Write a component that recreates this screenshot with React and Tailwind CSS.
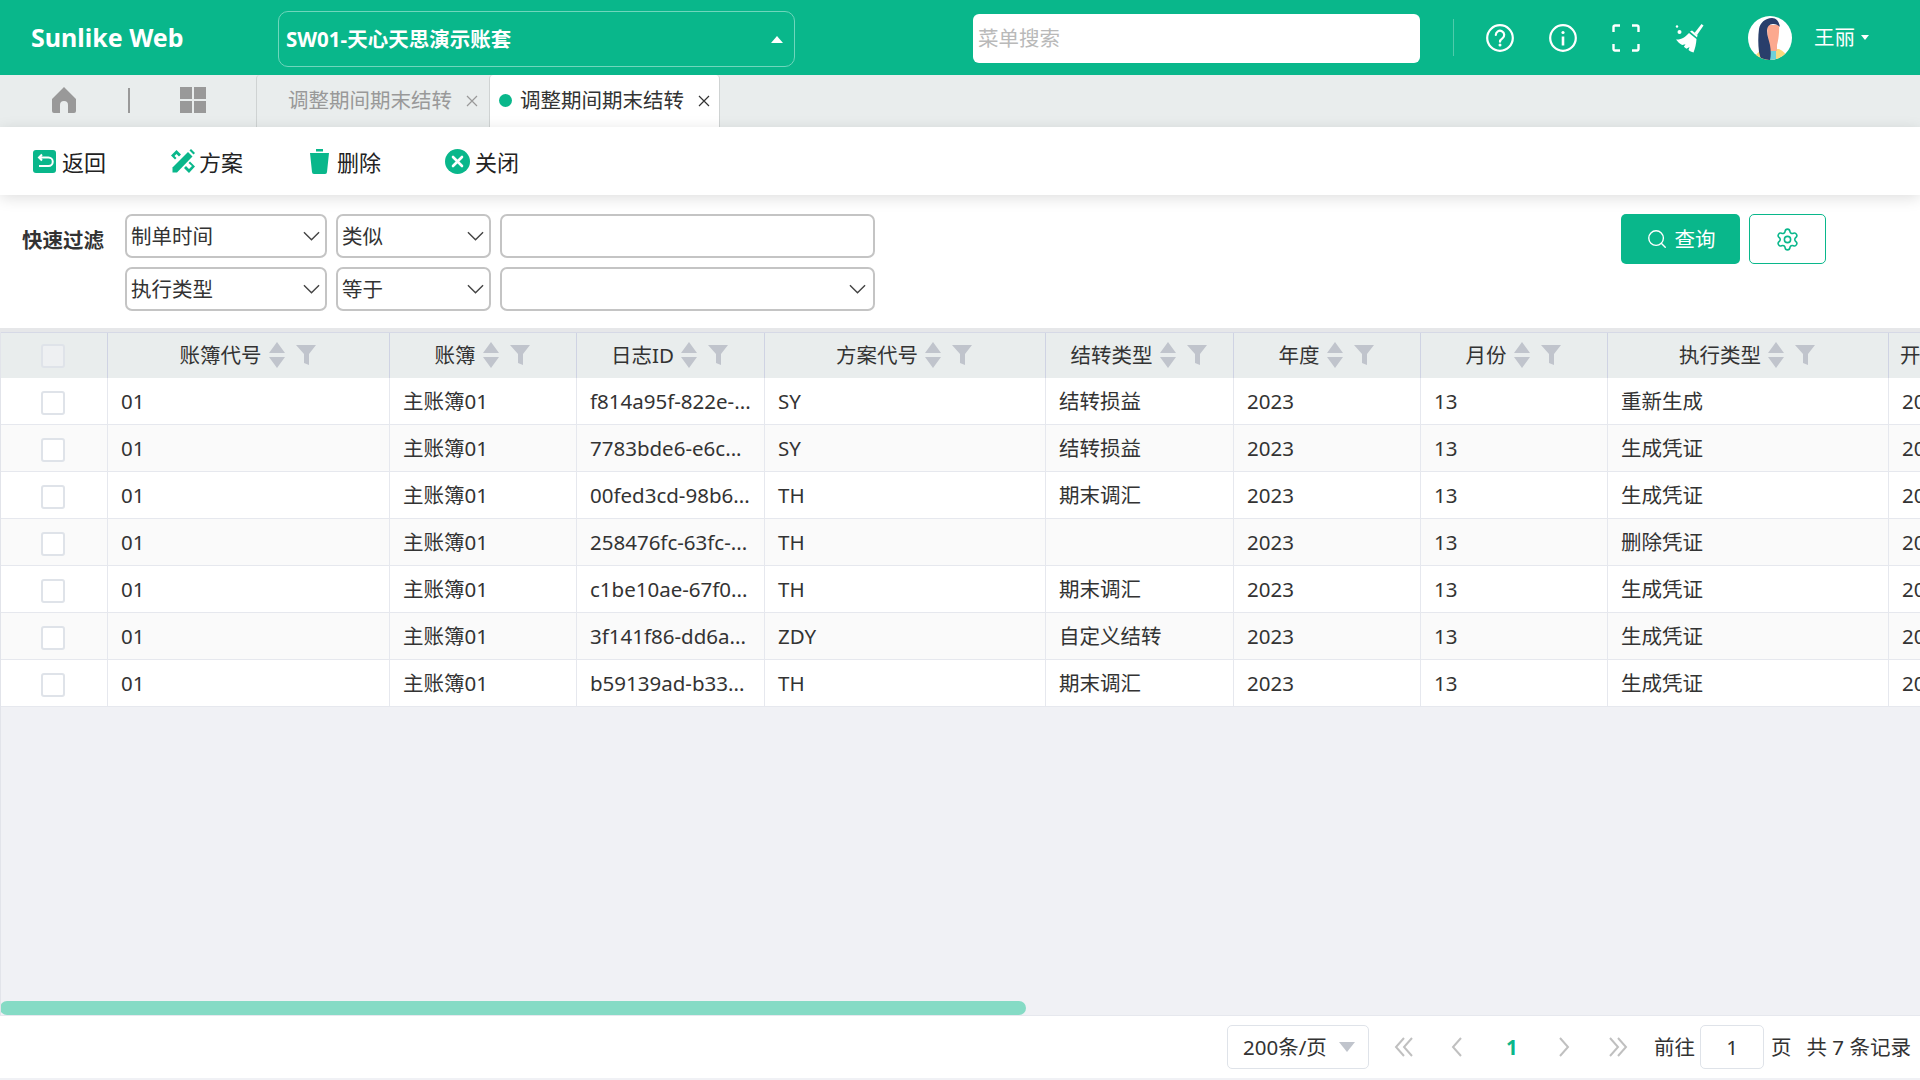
import React from 'react';
import { Search, Settings } from 'lucide-react';

const columns = [
  { label: '账簿代号', w: 'w-[282px]' },
  { label: '账簿', w: 'w-[187px]' },
  { label: '日志ID', w: 'w-[188px]' },
  { label: '方案代号', w: 'w-[281px]' },
  { label: '结转类型', w: 'w-[188px]' },
  { label: '年度', w: 'w-[187px]' },
  { label: '月份', w: 'w-[187px]' },
  { label: '执行类型', w: 'w-[281px]' },
];

const rows = [
  ['01', '主账簿01', 'f814a95f-822e-...', 'SY', '结转损益', '2023', '13', '重新生成'],
  ['01', '主账簿01', '7783bde6-e6c...', 'SY', '结转损益', '2023', '13', '生成凭证'],
  ['01', '主账簿01', '00fed3cd-98b6...', 'TH', '期末调汇', '2023', '13', '生成凭证'],
  ['01', '主账簿01', '258476fc-63fc-...', 'TH', '', '2023', '13', '删除凭证'],
  ['01', '主账簿01', 'c1be10ae-67f0...', 'TH', '期末调汇', '2023', '13', '生成凭证'],
  ['01', '主账簿01', '3f141f86-dd6a...', 'ZDY', '自定义结转', '2023', '13', '生成凭证'],
  ['01', '主账簿01', 'b59139ad-b33...', 'TH', '期末调汇', '2023', '13', '生成凭证'],
];

const Chevron = () => (
  <svg viewBox="0 0 18 10" className="w-[17px] h-[10px]" fill="none" stroke="#444" strokeWidth="1.5">
    <path d="M1 1l8 8 8-8" />
  </svg>
);

const FilterSelect = ({ value, pr = 'pr-[5px]' }) => (
  <div className={`h-[44px] border-2 border-[#c4c4c4] rounded-[7px] flex items-center justify-between pl-[4px] ${pr} text-[20.5px] text-[#333]`}>
    <span className="pt-[1px]">{value}</span>
    <Chevron />
  </div>
);

const SortFilter = () => (
  <span className="flex items-center ml-[7px] gap-[11px] -mt-[1px]">
    <svg viewBox="0 0 16 26" className="w-[16px] h-[26px]" fill="#c0c4cc">
      <path d="M8 0l8 11H0zM0 15h16L8 26z" />
    </svg>
    <svg viewBox="0 0 20 20" className="w-[20px] h-[20px]" fill="#c0c4cc">
      <path d="M0 0h20l-7 9v11l-5-2V9z" />
    </svg>
  </span>
);

const Checkbox = ({ header }) => (
  <span className={`block w-[24px] h-[24px] rounded-[3px] border-2 border-[#dfe3e9] ${header ? 'bg-[#eef0f2]' : 'bg-white'}`} />
);

const ToolButton = ({ icon, label, className }) => (
  <div className={`flex items-center gap-[6px] text-[22px] text-[#222] ${className}`}>
    {icon}
    <span className="pt-[3px]">{label}</span>
  </div>
);

const PagerArrow = ({ d, className = '' }) => (
  <svg viewBox="0 0 22 20" className={`w-[22px] h-[20px] ${className}`} fill="none" stroke="#c0c0c0" strokeWidth="2">
    <path d={d} />
  </svg>
);

const TabClose = ({ color }) => (
  <svg viewBox="0 0 12 12" className="ml-[14px] w-[12px] h-[12px]" fill="none" stroke={color} strokeWidth="1.2">
    <path d="M1 1l10 10M11 1L1 11" />
  </svg>
);

export default function App() {
  return (
    <div className="w-[1920px] h-[1080px] overflow-hidden flex flex-col bg-[#f0f1f5] font-['Noto_Sans','Noto_Sans_CJK_SC',sans-serif]">
      {/* top bar */}
      <div className="h-[75px] shrink-0 bg-[#09b78b] flex items-center text-white">
        <div className="w-[278px] pl-[31px] text-[25px] font-bold leading-none">Sunlike Web</div>
        <div className="mt-[3px] w-[517px] h-[56px] border border-[#6fd6bc] rounded-[10px] flex items-center justify-between pl-[7px] pr-[11px] text-[20.5px] font-bold">
          <span>SW01-天心天思演示账套</span>
          <span className="w-0 h-0 border-x-[6px] border-x-transparent border-b-[7px] border-b-white" />
        </div>
        <div className="mt-[1px] ml-[178px] w-[447px] h-[49px] bg-white rounded-[6px] flex items-center pl-[5px] text-[20.5px] text-[#b9b9b9]">菜单搜索</div>
        <div className="ml-[33px] w-px h-[37px] bg-[#4fcbab]" />
        <svg viewBox="0 0 28 28" className="ml-[32px] w-[28px] h-[28px]" fill="none" stroke="#fff" strokeWidth="2.2">
          <circle cx="14" cy="14" r="12.8" />
          <path d="M9.8 11a4.2 4.2 0 1 1 6.6 3.4c-1.5 1-2.4 1.700-2.400 3.300" strokeLinecap="round" />
          <circle cx="14" cy="21" r="1.500" fill="#fff" stroke="none" />
        </svg>
        <svg viewBox="0 0 28 28" className="ml-[35px] w-[28px] h-[28px]" fill="none" stroke="#fff" strokeWidth="2.2">
          <circle cx="14" cy="14" r="12.8" />
          <circle cx="14" cy="8.500" r="1.600" fill="#fff" stroke="none" />
          <path d="M14 12.500v9" strokeWidth="2.600" />
        </svg>
        <svg viewBox="0 0 28 28" className="ml-[35px] w-[28px] h-[28px]" fill="none" stroke="#fff" strokeWidth="2.4">
          <path d="M1.500 8V3a1.500 1.500 0 0 1 1.500-1.500h5M20 1.500h5A1.500 1.500 0 0 1 26.500 3v5M26.500 20v5a1.500 1.500 0 0 1-1.500 1.500h-5M8 26.500H3A1.500 1.500 0 0 1 1.500 25v-5" />
        </svg>
        <svg viewBox="0 0 30 30" className="ml-[34px] w-[30px] h-[30px]" fill="#fff">
          <path d="M27.500 1l2 1.500-6.500 9.500-2.500-2z" />
          <path d="M16 8.500l2-1 5.500 4.500-.5 2.500z" />
          <path d="M15 10l7.500 6c-.3 4.500-1.300 9.500-3 13.500-2-.5-3.800-1.600-5-2.600l1-3-3 1.800c-1-.6-1.900-1.300-2.600-2l1.600-2.400-3.300.8C6 21 3.500 18.500 2 16.500c5 .5 9.500-2.500 13-6.500z" />
          <circle cx="3" cy="3.500" r="1.200" />
          <circle cx="5.500" cy="9" r="2" />
        </svg>
        <svg viewBox="0 0 44 44" className="ml-[44px] w-[44px] h-[44px]">
          <clipPath id="avatar"><circle cx="22" cy="22" r="22" /></clipPath>
          <g clipPath="url(#avatar)">
            <rect width="44" height="44" fill="#fff" />
            <path d="M6 44c1-6 5-9 11-11h14c5 2 8 6 9 11z" fill="#fbd97f" />
            <rect x="20" y="34" width="8" height="10" fill="#6fd0da" />
            <path d="M19 9h12c.5 7-.5 15-2 20v6h-9z" fill="#fca98f" />
            <path d="M24 2c-7 0-12 5-13 11-1 7-1 15 0 23l2 8h9c1-4 1-9 0-15-1-5-3-9-3-14 0-4 2-7 6-7 3 0 5 1 7 3-1-6-4-9-8-9z" fill="#293e6b" />
          </g>
        </svg>
        <span className="ml-[22px] text-[20.5px]">王丽</span>
        <span className="ml-[6px] w-0 h-0 border-x-[4px] border-x-transparent border-t-[5px] border-t-white" />
      </div>

      {/* tabs */}
      <div className="h-[52px] shrink-0 bg-[#e9eded] flex items-center">
        <div className="w-[256px] flex items-center pb-[2px]">
          <svg viewBox="0 0 24 26" className="ml-[52px] w-[24px] h-[26px]" fill="#999">
            <path d="M12 0l12 12v12a2 2 0 0 1-2 2h-6v-8a4 4 0 0 0-8 0v8H2a2 2 0 0 1-2-2V12z" />
          </svg>
          <span className="ml-[52px] w-[2px] h-[25px] bg-[#999]" />
          <svg viewBox="0 0 26 26" className="ml-[50px] w-[26px] h-[26px]" fill="#999">
            <rect width="12" height="12" /><rect x="14" width="12" height="12" />
            <rect y="14" width="12" height="12" /><rect x="14" y="14" width="12" height="12" />
          </svg>
        </div>
        <div className="w-[233px] h-full border-l border-[#cfd3d3] rounded-tl-[4px] flex items-center pl-[31px] text-[20.5px] text-[#999]">
          <span className="-mt-[2px]">调整期间期末结转</span>
          <TabClose color="#999" />
        </div>
        <div className="w-[231px] h-full bg-white border-x border-[#cfd3d3] rounded-t-[4px] flex items-center pl-[9px] text-[20.5px] text-[#333]">
          <span className="w-[13px] h-[13px] rounded-full bg-[#09b78b] -mt-[1px]" />
          <span className="ml-[8px] -mt-[2px]">调整期间期末结转</span>
          <TabClose color="#333" />
        </div>
      </div>

      {/* toolbar */}
      <div className="h-[68px] shrink-0 bg-white flex items-center relative z-10 shadow-[0_3px_14px_rgba(0,0,0,0.13)]">
        <ToolButton
          className="ml-[33px]"
          label="返回"
          icon={
            <svg viewBox="0 0 23 23" className="w-[23px] h-[23px]">
              <rect width="23" height="23" rx="3" fill="#09b78b" />
              <path d="M6.500 7.500h9a3.700 3.700 0 0 1 0 8.500H6M9 4.500L6 7.500l3 3" fill="none" stroke="#fff" strokeWidth="2" />
            </svg>
          }
        />
        <ToolButton
          className="ml-[64px]"
          label="方案"
          icon={
            <svg viewBox="0 0 25 25" className="w-[25px] h-[25px] -mr-[2px]" fill="#09b78b">
              <path d="M18 3l4.500 4.500L7 23.500H2.500V18.500z" />
              <path d="M19.500 1.500l1.500-1.500 4 4-1.500 1.500z" />
              <path d="M1 6.500L6.500 1l4.500 4.500-2 2-2.500-2.500L4.500 7l2 2-1.500 1.500z" />
              <path d="M18.500 14l1.500-1.500 5 5-6 6.500-5-5 2-2 3 3 3-3z" />
            </svg>
          }
        />
        <ToolButton
          className="ml-[67px]"
          label="删除"
          icon={
            <svg viewBox="0 0 19 25" className="w-[19px] h-[25px] mr-[2px]" fill="#09b78b">
              <path d="M6 0h7v2.500H6zM0 4h19l-2 19a2 2 0 0 1-2 2H4a2 2 0 0 1-2-2z" />
            </svg>
          }
        />
        <ToolButton
          className="ml-[64px]"
          label="关闭"
          icon={
            <svg viewBox="0 0 25 25" className="w-[25px] h-[25px] -mr-[1px]">
              <circle cx="12.500" cy="12.500" r="12.500" fill="#09b78b" />
              <path d="M8 8l9 9M17 8l-9 9" stroke="#fff" strokeWidth="2.600" strokeLinecap="round" />
            </svg>
          }
        />
      </div>

      {/* quick filter */}
      <div className="h-[133px] shrink-0 bg-white flex items-start pt-[19px] pl-[22px]">
        <div className="w-[103px] mt-[11px] text-[20.5px] font-bold text-[#333]">快速过滤</div>
        <div className="grid grid-cols-[202px_155px_375px] gap-x-[9px] gap-y-[9px]">
          <FilterSelect value="制单时间" />
          <FilterSelect value="类似" />
          <div className="h-[44px] border-2 border-[#c4c4c4] rounded-[7px]" />
          <FilterSelect value="执行类型" />
          <FilterSelect value="等于" />
          <FilterSelect value="" pr="pr-[7px]" />
        </div>
        <div className="ml-[746px] w-[119px] h-[50px] rounded-[5px] bg-[#09b78b] flex items-center justify-center gap-[7px] text-white text-[20.5px]">
          <Search size={22} strokeWidth={1.5} />
          <span>查询</span>
        </div>
        <div className="ml-[9px] w-[77px] h-[50px] rounded-[5px] border border-[#09b78b] bg-white flex items-center justify-center text-[#09b78b]">
          <Settings size={25} strokeWidth={1.5} />
        </div>
      </div>

      {/* table */}
      <div className="h-[4px] shrink-0 bg-[#e6e7e9]" />
      <div className="flex-1 min-h-0 flex flex-col border-l border-[#e2e4ea] overflow-hidden">
        <div className="h-[46px] shrink-0 flex bg-[#e9eded] border-t border-[#d6d9e6] text-[20.5px] text-[#333]">
          <div className="w-[107px] shrink-0 flex items-center justify-center border-r border-[#cfd3e3] pr-[2px] pt-[1px]">
            <Checkbox header />
          </div>
          {columns.map((col) => (
            <div key={col.label} className={`${col.w} shrink-0 flex items-center justify-center border-r border-[#cfd3e3] pb-[1px] pr-[2px]`}>
              <span>{col.label}</span>
              <SortFilter />
            </div>
          ))}
          <div className="flex-1 pl-[11px] flex items-center overflow-hidden whitespace-nowrap">开始时间</div>
        </div>
        {rows.map((row, i) => (
          <div key={i} className={`h-[47px] shrink-0 flex border-b border-[#e6e8ee] text-[20.5px] text-[#333] ${i % 2 ? 'bg-[#fafafa]' : 'bg-white'}`}>
            <div className="w-[107px] shrink-0 flex items-center justify-center border-r border-[#e6e8ee] pr-[2px] pt-[3px]">
              <Checkbox />
            </div>
            {row.map((cell, j) => (
              <div key={j} className={`${columns[j].w} shrink-0 flex items-center pl-[13px] pt-[1px] border-r border-[#e6e8ee] overflow-hidden whitespace-nowrap`}>
                {cell}
              </div>
            ))}
            <div className="flex-1 pl-[13px] flex items-center overflow-hidden whitespace-nowrap">2023-12-31</div>
          </div>
        ))}
        <div className="flex-1 flex items-end -ml-px">
          <div className="w-[1026px] h-[14px] rounded-full bg-[#85dbc5]" />
        </div>
      </div>

      {/* pagination */}
      <div className="h-[63px] shrink-0 mb-[2px] bg-white border-t border-[#e6e8ee] flex items-center text-[20.5px] text-[#333]">
        <div className="ml-[1227px] w-[142px] h-[44px] border border-[#dfe3e9] rounded-[5px] flex items-center justify-between pl-[15px] pr-[13px]">
          <span>200条/页</span>
          <span className="w-0 h-0 border-x-[8px] border-x-transparent border-t-[10px] border-t-[#c0c4cc]" />
        </div>
        <PagerArrow className="ml-[24px]" d="M11 1L3 10l8 9M19 1l-8 9 8 9" />
        <PagerArrow className="ml-[31px]" d="M15 1l-8 9 8 9" />
        <span className="ml-[38px] w-[14px] font-bold text-[#09b78b]">1</span>
        <PagerArrow className="ml-[33px]" d="M7 1l8 9-8 9" />
        <PagerArrow className="ml-[32px]" d="M3 1l8 9-8 9M11 1l8 9-8 9" />
        <span className="ml-[25px]">前往</span>
        <div className="ml-[5px] w-[64px] h-[44px] border border-[#dfe3e9] rounded-[5px] flex items-center justify-center">1</div>
        <span className="ml-[7px]">页</span>
        <span className="ml-[15px] whitespace-nowrap">共 7 条记录</span>
      </div>
    </div>
  );
}
